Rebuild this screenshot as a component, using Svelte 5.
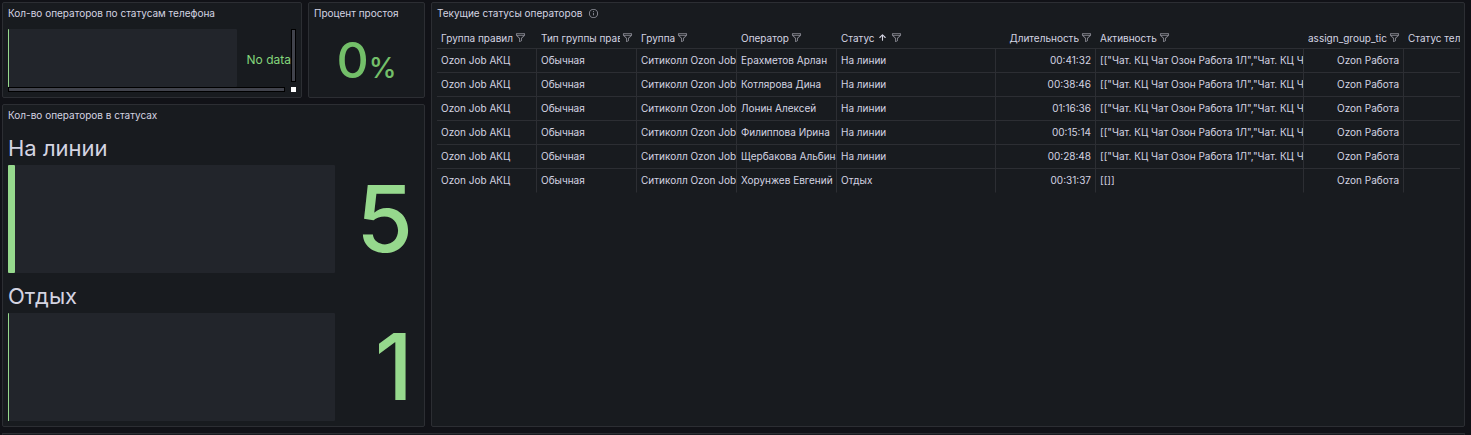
<!--
  Operator monitoring dashboard: phone status gauge, idle percentage,
  operators per status and the current status table.
-->
<script>
  const icons = {
    filter:
      'M19,2H5A3,3,0,0,0,2,5V6.17a3,3,0,0,0,.25,1.2l0,.06a2.81,2.81,0,0,0,.59.86L9,14.41V21a1,1,0,0,0,.47.85A1,1,0,0,0,10,22a1,1,0,0,0,.45-.11l4-2A1,1,0,0,0,15,19V14.41l6.12-6.12a2.81,2.81,0,0,0,.59-.86l0-.06A3,3,0,0,0,22,6.17V5A3,3,0,0,0,19,2ZM13.29,13.29A1,1,0,0,0,13,14v4.38l-2,1V14a1,1,0,0,0-.29-.71L5.41,8H18.59ZM20,6H4V5A1,1,0,0,1,5,4H19a1,1,0,0,1,1,1Z',
    info: 'M12,2A10,10,0,1,0,22,12,10,10,0,0,0,12,2Zm0,18a8,8,0,1,1,8-8A8,8,0,0,1,12,20Zm0-9.5a1,1,0,0,0-1,1v4a1,1,0,0,0,2,0v-4A1,1,0,0,0,12,10.5Zm0-4a1.25,1.25,0,1,0,1.25,1.25A1.25,1.25,0,0,0,12,6.5Z',
    arrowUp:
      'M17.71,11.29l-5-5a1,1,0,0,0-.33-.21,1,1,0,0,0-.76,0,1,1,0,0,0-.33.21l-5,5a1,1,0,0,0,1.42,1.42L11,9.41V17a1,1,0,0,0,2,0V9.41l3.29,3.3a1,1,0,0,0,1.42,0A1,1,0,0,0,17.71,11.29Z',
  };

  const columns = [
    { key: 'rules', label: 'Группа правил' },
    { key: 'type', label: 'Тип группы правил' },
    { key: 'group', label: 'Группа' },
    { key: 'operator', label: 'Оператор' },
    { key: 'status', label: 'Статус', size: 'status', sorted: true },
    { key: 'duration', label: 'Длительность', right: true },
    { key: 'activity', label: 'Активность', size: 'activity' },
    { key: 'ticket', label: 'assign_group_ticket', right: true },
    { key: 'phone', label: 'Статус телефона' },
  ];

  const chats = '[["Чат. КЦ Чат Озон Работа 1Л","Чат. КЦ Чат Озон Работа 2Л"]]';

  const rows = [
    ['Ерахметов Арлан', 'На линии', '00:41:32', chats],
    ['Котлярова Дина', 'На линии', '00:38:46', chats],
    ['Лонин Алексей', 'На линии', '01:16:36', chats],
    ['Филиппова Ирина', 'На линии', '00:15:14', chats],
    ['Щербакова Альбина', 'На линии', '00:28:48', chats],
    ['Хорунжев Евгений', 'Отдых', '00:31:37', '[[]]'],
  ].map(([operator, status, duration, activity]) => ({
    rules: 'Ozon Job АКЦ',
    type: 'Обычная',
    group: 'Ситиколл Ozon Job',
    operator,
    status,
    duration,
    activity,
    ticket: 'Ozon Работа',
    phone: '',
  }));

  const gauges = [
    { label: 'На линии', value: 5, percent: 2 },
    { label: 'Отдых', value: 1, percent: 0 },
  ];
</script>

{#snippet icon(name, large = false)}
  <svg class="icon" class:large viewBox="0 0 24 24" aria-hidden="true"><path d={icons[name]} /></svg>
{/snippet}

<main class="dashboard">
  <section class="panel">
    <h2>Кол-во операторов по статусам телефона</h2>
    <div class="scroll-area">
      <div class="gauge short">
        <div class="track"><div class="fill"></div></div>
        <span class="no-data">No data</span>
      </div>
      <div class="scrollbar vertical"></div>
      <div class="scrollbar horizontal"></div>
      <div class="corner"></div>
    </div>
  </section>

  <section class="panel">
    <h2>Процент простоя</h2>
    <div class="stat">0<span class="unit">%</span></div>
  </section>

  <section class="panel statuses">
    <h2>Кол-во операторов в статусах</h2>
    <div class="gauges">
      {#each gauges as g (g.label)}
        <div>
          <div class="gauge-label">{g.label}</div>
          <div class="gauge">
            <div class="track"><div class="fill" style:width="{g.percent}%"></div></div>
            <span class="gauge-value">{g.value}</span>
          </div>
        </div>
      {/each}
    </div>
  </section>

  <section class="panel operators">
    <h2>
      Текущие статусы операторов
      <button class="info" aria-label="Описание панели">{@render icon('info')}</button>
    </h2>
    <div class="table-wrap">
      <table>
        <colgroup>
          {#each columns as col (col.key)}
            <col class={col.size ?? 'regular'} />
          {/each}
        </colgroup>
        <thead>
          <tr>
            {#each columns as col (col.key)}
              <th scope="col" aria-sort={col.sorted ? 'ascending' : undefined}>
                <div class="head" class:right={col.right}>
                  <button class="sort">
                    <span class="name">{col.label}</span>
                    {#if col.sorted}{@render icon('arrowUp', true)}{/if}
                  </button>
                  <button class="filter" aria-label="Фильтр: {col.label}">{@render icon('filter')}</button>
                </div>
              </th>
            {/each}
          </tr>
        </thead>
        <tbody>
          {#each rows as row (row.operator)}
            <tr>
              {#each columns as col (col.key)}
                <td class:right={col.right}>{row[col.key]}</td>
              {/each}
            </tr>
          {/each}
        </tbody>
      </table>
    </div>
  </section>

  <section class="panel next"></section>
</main>

<style>
  :global(body) {
    background: #111217;
  }

  .dashboard {
    --text: #d4d4e2;
    --line: #2c2e33;
    --green: #96d98d;
    box-sizing: border-box;
    height: 100vh;
    overflow: hidden;
    padding: 2px 6px 0 2px;
    display: grid;
    grid-template-columns: 300fr 117fr 1034fr;
    grid-template-rows: auto auto 1fr;
    gap: 6px;
    color: var(--text);
    font: 400 10px/20px Inter, sans-serif;
  }

  .panel {
    min-width: 0;
    padding: 0 5px 5px;
    border: 1px solid var(--line);
    border-radius: 2px;
    background: #181b1f;
    display: flex;
    flex-direction: column;
  }

  .statuses {
    grid-column: 1 / 3;
    grid-row: 2;
  }

  .operators {
    grid-column: 3;
    grid-row: 1 / 3;
    padding-right: 4px;
  }

  .next {
    grid-column: 1 / -1;
    padding: 0;
    border-bottom: 0;
  }

  h2 {
    margin: 0;
    padding-bottom: 6px;
    display: flex;
    align-items: center;
    font: inherit;
    white-space: nowrap;
  }

  button {
    padding: 0;
    border: 0;
    background: none;
    color: inherit;
    font: inherit;
    cursor: pointer;
    display: flex;
    align-items: center;
  }

  .icon {
    width: 11px;
    height: 11px;
    flex-shrink: 0;
    fill: currentColor;
  }

  .icon.large {
    width: 13px;
    height: 13px;
  }

  .info {
    margin-left: 6px;
    color: #8e8f99;
  }

  /* Phone status gauge */
  .scroll-area {
    display: grid;
    grid-template-columns: 1fr 5px;
  }

  .scrollbar {
    box-sizing: border-box;
    border: 1px solid #000;
    background: #41434c;
  }

  .vertical {
    margin-bottom: 5px;
  }

  .horizontal {
    height: 5px;
    margin-right: 6px;
  }

  .corner {
    background: #fff;
  }

  .gauge {
    display: flex;
    align-items: center;
    height: 108px;
  }

  .gauge.short {
    height: 58px;
  }

  .track {
    flex: 1;
    height: 100%;
    border-radius: 1px;
    background: #22252b;
  }

  .fill {
    min-width: 1px;
    width: 1px;
    height: 100%;
    border-radius: 1px;
    background: var(--green);
  }

  .no-data {
    padding: 4px 0 0 10px;
    color: #84d67c;
    font-size: 12px;
  }

  .stat {
    flex: 1;
    display: flex;
    justify-content: center;
    align-items: baseline;
    color: #73bf69;
    font-size: 50px;
    font-weight: 500;
    line-height: 62px;
  }

  .unit {
    font-size: 28px;
    line-height: 30px;
  }

  /* Operators per status */
  .gauges {
    display: flex;
    flex-direction: column;
    gap: 6px;
  }

  .gauge-label {
    font-size: 22px;
    line-height: 34px;
  }

  .gauge-value {
    box-sizing: border-box;
    width: 84px;
    padding-right: 6px;
    color: var(--green);
    font-size: 92px;
    font-weight: 500;
    line-height: 108px;
    text-align: right;
  }

  /* Status table */
  .table-wrap {
    overflow: hidden;
  }

  table {
    width: 100%;
    min-width: 1067px;
    table-layout: fixed;
    border-collapse: separate;
    border-spacing: 0;
  }

  .regular {
    width: 100px;
  }

  .status {
    width: 159px;
  }

  th,
  td {
    box-sizing: border-box;
    padding: 0 4px 2px;
    border-bottom: 1px solid var(--line);
    overflow: hidden;
    font-weight: 400;
    text-align: left;
    white-space: nowrap;
  }

  th {
    height: 20px;
    line-height: 16px;
  }

  td {
    height: 24px;
    border-right: 1px solid var(--line);
  }

  tbody tr:last-child td {
    border-bottom-color: transparent;
  }

  td.right {
    text-align: right;
  }

  .head {
    display: flex;
    align-items: center;
  }

  .head.right {
    justify-content: flex-end;
  }

  .sort {
    min-width: 0;
    gap: 1px;
  }

  .name {
    overflow: hidden;
  }

  .filter {
    margin-left: 2px;
    color: #85868f;
  }
</style>
